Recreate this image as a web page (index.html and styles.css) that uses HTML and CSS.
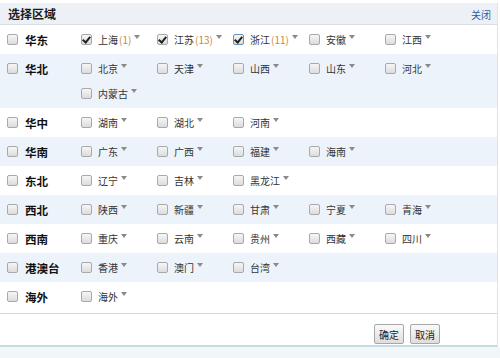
FILE: index.html
```html
<!DOCTYPE html>
<html>
  <head>
    <meta charset="utf-8" />
    <title>选择区域</title>
    <link rel="stylesheet" href="styles.css">
  </head>
  <body>
    <div class="panel">
      <!-- title bar -->
      <div class="head">
        <span class="title">选择区域</span>
        <a class="close" href="#">关闭</a>
      </div>

      <!-- regions -->
      <div class="rows">
        <div class="row">
          <div class="region"><span class="cb"></span>华东</div>
          <div class="provs">
            <div class="prov"><span class="cb on"></span>上海<span class="num">(1)</span><i class="arr"></i></div>
            <div class="prov"><span class="cb on"></span>江苏<span class="num">(13)</span><i class="arr"></i></div>
            <div class="prov"><span class="cb on focus"></span>浙江<span class="num">(11)</span><i class="arr"></i></div>
            <div class="prov"><span class="cb"></span>安徽<i class="arr"></i></div>
            <div class="prov"><span class="cb"></span>江西<i class="arr"></i></div>
          </div>
        </div>
        <div class="row alt">
          <div class="region"><span class="cb"></span>华北</div>
          <div class="provs">
            <div class="prov"><span class="cb"></span>北京<i class="arr"></i></div>
            <div class="prov"><span class="cb"></span>天津<i class="arr"></i></div>
            <div class="prov"><span class="cb"></span>山西<i class="arr"></i></div>
            <div class="prov"><span class="cb"></span>山东<i class="arr"></i></div>
            <div class="prov"><span class="cb"></span>河北<i class="arr"></i></div>
            <div class="prov"><span class="cb"></span>内蒙古<i class="arr"></i></div>
          </div>
        </div>
        <div class="row">
          <div class="region"><span class="cb"></span>华中</div>
          <div class="provs">
            <div class="prov"><span class="cb"></span>湖南<i class="arr"></i></div>
            <div class="prov"><span class="cb"></span>湖北<i class="arr"></i></div>
            <div class="prov"><span class="cb"></span>河南<i class="arr"></i></div>
          </div>
        </div>
        <div class="row alt">
          <div class="region"><span class="cb"></span>华南</div>
          <div class="provs">
            <div class="prov"><span class="cb"></span>广东<i class="arr"></i></div>
            <div class="prov"><span class="cb"></span>广西<i class="arr"></i></div>
            <div class="prov"><span class="cb"></span>福建<i class="arr"></i></div>
            <div class="prov"><span class="cb"></span>海南<i class="arr"></i></div>
          </div>
        </div>
        <div class="row">
          <div class="region"><span class="cb"></span>东北</div>
          <div class="provs">
            <div class="prov"><span class="cb"></span>辽宁<i class="arr"></i></div>
            <div class="prov"><span class="cb"></span>吉林<i class="arr"></i></div>
            <div class="prov"><span class="cb"></span>黑龙江<i class="arr"></i></div>
          </div>
        </div>
        <div class="row alt">
          <div class="region"><span class="cb"></span>西北</div>
          <div class="provs">
            <div class="prov"><span class="cb"></span>陕西<i class="arr"></i></div>
            <div class="prov"><span class="cb"></span>新疆<i class="arr"></i></div>
            <div class="prov"><span class="cb"></span>甘肃<i class="arr"></i></div>
            <div class="prov"><span class="cb"></span>宁夏<i class="arr"></i></div>
            <div class="prov"><span class="cb"></span>青海<i class="arr"></i></div>
          </div>
        </div>
        <div class="row">
          <div class="region"><span class="cb"></span>西南</div>
          <div class="provs">
            <div class="prov"><span class="cb"></span>重庆<i class="arr"></i></div>
            <div class="prov"><span class="cb"></span>云南<i class="arr"></i></div>
            <div class="prov"><span class="cb"></span>贵州<i class="arr"></i></div>
            <div class="prov"><span class="cb"></span>西藏<i class="arr"></i></div>
            <div class="prov"><span class="cb"></span>四川<i class="arr"></i></div>
          </div>
        </div>
        <div class="row alt">
          <div class="region"><span class="cb"></span>港澳台</div>
          <div class="provs">
            <div class="prov"><span class="cb"></span>香港<i class="arr"></i></div>
            <div class="prov"><span class="cb"></span>澳门<i class="arr"></i></div>
            <div class="prov"><span class="cb"></span>台湾<i class="arr"></i></div>
          </div>
        </div>
        <div class="row">
          <div class="region"><span class="cb"></span>海外</div>
          <div class="provs">
            <div class="prov"><span class="cb"></span>海外<i class="arr"></i></div>
          </div>
        </div>
      </div>

      <!-- buttons -->
      <div class="foot">
        <button class="btn">确定</button>
        <button class="btn">取消</button>
      </div>
    </div>
    <div class="under"></div>
  </body>
</html>
```

FILE: styles.css
```css
body {
  margin: 0;
  padding-top: 3px;
  background: #fff;
  color: #333;
  font-family: "Noto Sans CJK SC", "Liberation Sans", sans-serif;
  font-size: 10px;
}
.panel {
  width: 497px;
  border-right: 1px solid #dde3e8;
  background: #fff;
}

/* title bar */
.head {
  height: 21px;
  display: flex;
  align-items: center;
  justify-content: space-between;
  padding: 0 6px 0 8px;
  background: #edf1f5;
  border-bottom: 1px solid #d9dee4;
}
.title {
  font-size: 12px;
  font-weight: bold;
  color: #1a1a1a;
}
.close {
  color: #2f5f9e;
  text-decoration: none;
  font-size: 10px;
  margin-top: 2px;
}

/* rows */
.rows {
  padding-bottom: 2px;
}
.row {
  display: flex;
  padding: 2px 0;
}
.row.alt {
  background: #edf3fb;
}
.region {
  width: 74px;
  padding-left: 7px;
  height: 25px;
  display: flex;
  align-items: center;
  font-size: 11.5px;
  font-weight: bold;
  color: #111;
}
.region .cb {
  margin-right: 7px;
}
.provs {
  width: 380px;
  display: flex;
  flex-wrap: wrap;
}
.prov {
  width: 76px;
  height: 25px;
  display: flex;
  align-items: center;
  color: #333;
}
.prov .cb {
  margin-right: 6px;
}
.num {
  color: #c98a37;
  margin-left: 1px;
}

/* checkbox */
.cb {
  width: 9px;
  height: 9px;
  flex: none;
  border: 1px solid #a9a9a9;
  border-radius: 2px;
  background: linear-gradient(#f6f6f6, #dcdcdc);
  position: relative;
}
.cb.on::after {
  content: "";
  position: absolute;
  left: 2px;
  top: 0px;
  width: 3px;
  height: 6px;
  border: solid #222;
  border-width: 0 2px 2px 0;
  transform: rotate(40deg);
}
.cb.focus {
  border-color: #6f8fb8;
}

/* dropdown arrow */
.arr {
  width: 0;
  height: 0;
  margin-left: 3px;
  margin-bottom: 5px;
  border-left: 3px solid transparent;
  border-right: 3px solid transparent;
  border-top: 4px solid #8a8a8a;
}

/* footer */
.foot {
  border-top: 1px solid #d6d8da;
  border-bottom: 2px solid #c6dbe6;
  height: 31px;
  display: flex;
  justify-content: flex-end;
  align-items: flex-start;
  gap: 6px;
  padding: 0 57px 0 0;
}
.btn {
  margin-top: 10px;
  height: 20px;
  padding: 0 4px;
  border: 1px solid #a7a7a7;
  border-radius: 2px;
  background: linear-gradient(#fafafa, #dedede);
  color: #222;
  font: inherit;
  font-size: 10px;
}
.under {
  height: 12px;
  background: #f1f6f9;
}
```
